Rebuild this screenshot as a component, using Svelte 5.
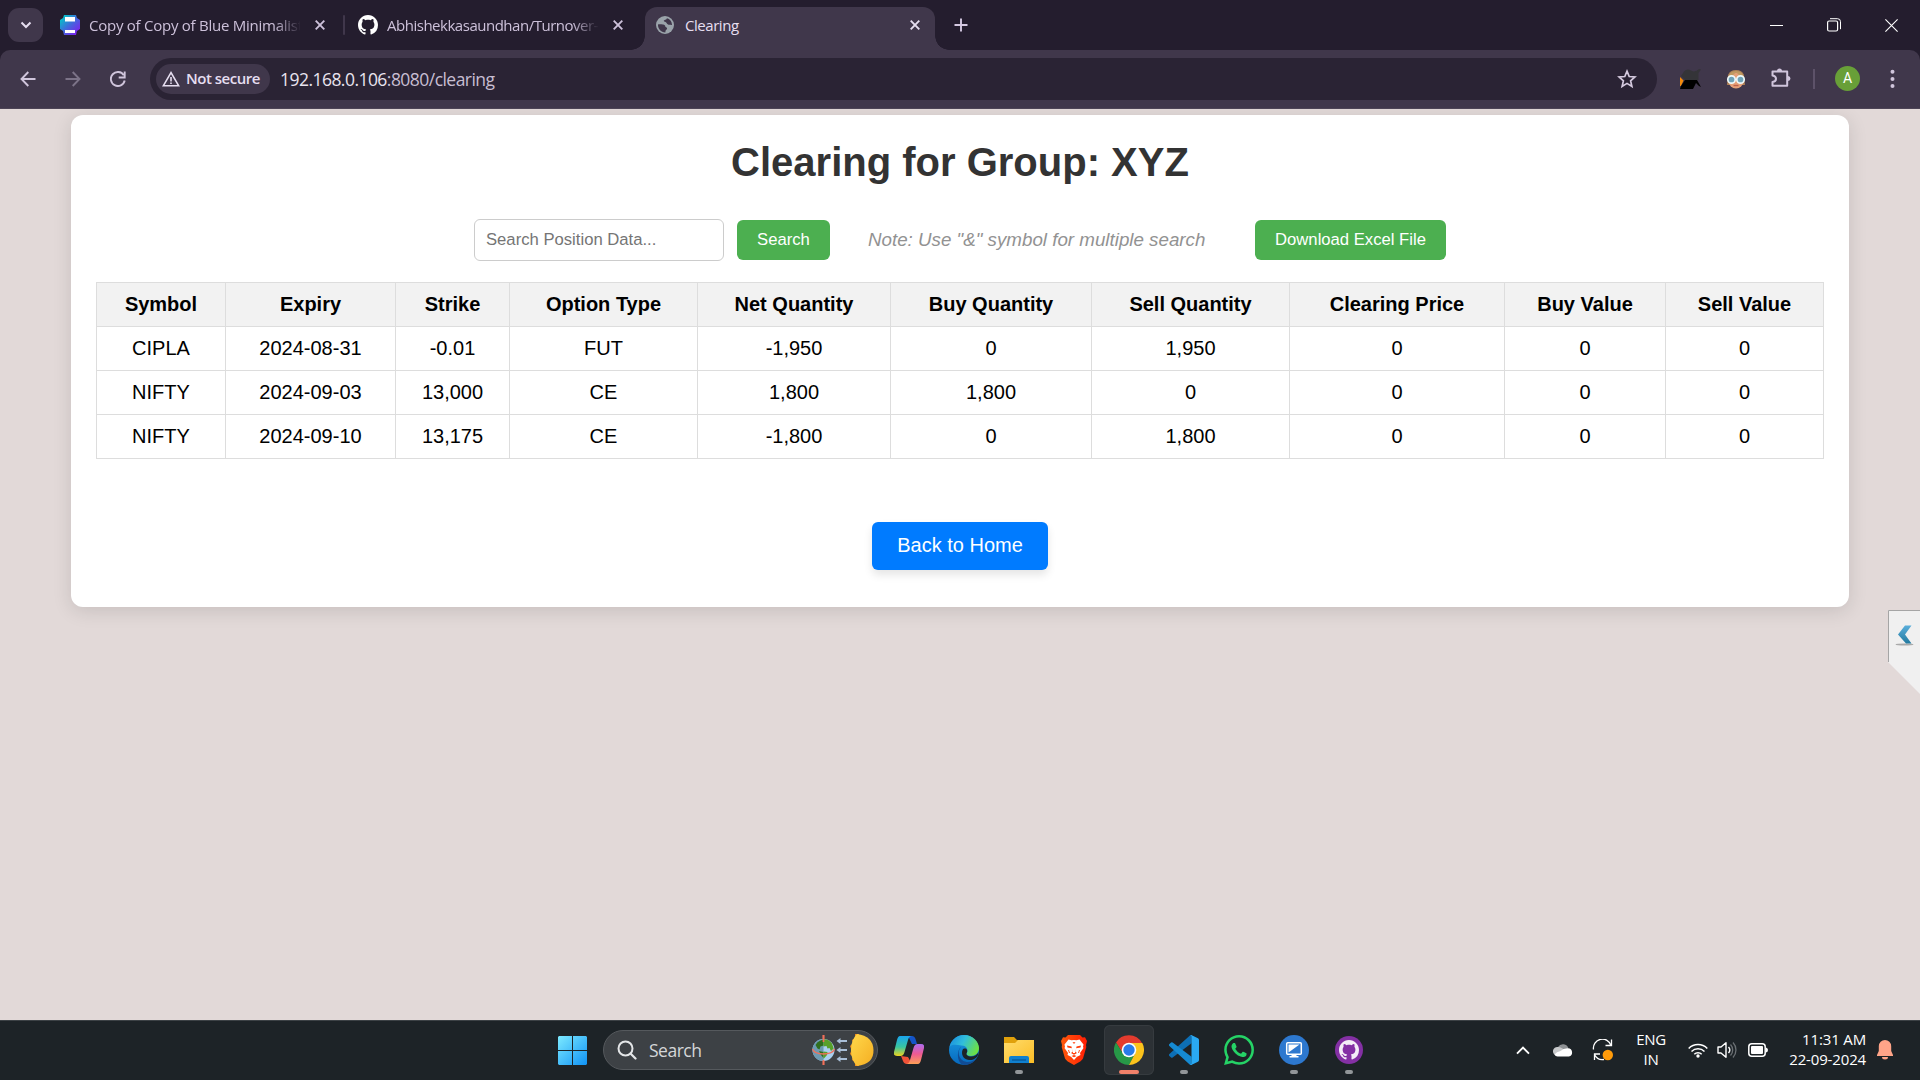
<script>
  const columns = [
    { label: 'Symbol', width: 129 },
    { label: 'Expiry', width: 170 },
    { label: 'Strike', width: 114 },
    { label: 'Option Type', width: 188 },
    { label: 'Net Quantity', width: 193 },
    { label: 'Buy Quantity', width: 201 },
    { label: 'Sell Quantity', width: 198 },
    { label: 'Clearing Price', width: 215 },
    { label: 'Buy Value', width: 161 },
    { label: 'Sell Value', width: 158 }
  ];
  const rows = [
    ['CIPLA', '2024-08-31', '-0.01', 'FUT', '-1,950', '0', '1,950', '0', '0', '0'],
    ['NIFTY', '2024-09-03', '13,000', 'CE', '1,800', '1,800', '0', '0', '0', '0'],
    ['NIFTY', '2024-09-10', '13,175', 'CE', '-1,800', '0', '1,800', '0', '0', '0']
  ];
  const githubMark =
    'M8 0C3.58 0 0 3.58 0 8c0 3.54 2.29 6.53 5.47 7.59.4.07.55-.17.55-.38 0-.19-.01-.82-.01-1.49-2.01.37-2.53-.49-2.69-.94-.09-.23-.48-.94-.82-1.13-.28-.15-.68-.52-.01-.53.63-.01 1.08.58 1.23.82.72 1.21 1.87.87 2.33.66.07-.52.28-.87.51-1.07-1.78-.2-3.64-.89-3.64-3.95 0-.87.31-1.59.82-2.15-.08-.2-.36-1.02.08-2.12 0 0 .67-.21 2.2.82.64-.18 1.32-.27 2-.27s1.36.09 2 .27c1.53-1.04 2.2-.82 2.2-.82.44 1.1.16 1.92.08 2.12.51.56.82 1.27.82 2.15 0 3.07-1.87 3.75-3.65 3.95.29.25.54.73.54 1.48 0 1.07-.01 1.93-.01 2.2 0 .21.15.46.55.38A8.01 8.01 0 0 0 16 8c0-4.42-3.58-8-8-8z';
</script>

{#snippet closeIcon()}
  <svg class="tab-close" width="12" height="12" viewBox="0 0 12 12"><path d="M1.7 1.7l8.6 8.6M10.3 1.7l-8.6 8.6" stroke="currentColor" stroke-width="1.9" fill="none" /></svg>
{/snippet}

<div class="screen">
  <header class="tabstrip">
    <div class="tab-search">
      <svg width="12" height="8" viewBox="0 0 12 8"><path d="M1.5 1.5L6 6l4.500-4.500" stroke="#e6def0" stroke-width="2" fill="none" /></svg>
    </div>
    <div class="tab tab-one">
      <svg width="20" height="20" viewBox="0 0 20 20">
        <defs><linearGradient id="canva" x1="0" y1="0" x2="1" y2="1"><stop offset="0.1" stop-color="#04c4c8" /><stop offset="0.5" stop-color="#4268dc" /><stop offset="0.9" stop-color="#7d20ee" /></linearGradient></defs>
        <path d="M4 0h12l1 3 3 2v9l-3 2-1 4H4l-1-4-3-2V5l3-2z" fill="url(#canva)" />
        <path d="M5 2h10v4.500H5zM5 15h10v3H5z" fill="#fff" />
      </svg>
      <span class="tab-title faded"><span class="t1">Copy of Copy of Blue Minimalist</span></span>
      {@render closeIcon()}
    </div>
    <div class="tab-sep"></div>
    <div class="tab tab-two">
      <svg width="20" height="20" viewBox="0 0 16 16"><path d={githubMark} fill="#fff" /></svg>
      <span class="tab-title faded"><span class="t2">Abhishekkasaundhan/Turnover-</span></span>
      {@render closeIcon()}
    </div>
    <div class="tab tab-active">
      <svg width="18" height="18" viewBox="0 0 18 18">
        <circle cx="9" cy="9" r="9" fill="#9aa3aa" />
        <path d="M2 8.400c1.600-.3 3.500.1 5 .1 1.600 0 2.300 1 2.300 2.100 0 1 1.800.5 1.800 2 0 1.300-1.500 1.300-1.600 2.600l-.2 1.200C5 16.200 1.700 12.600 2 8.400zM10.800 2.200c.2 1.600-3 1.200-3 2.900 0 1 2.300.6 2.800 1.800.5 1.300 2.100 2.200 3.500 1.800.8-.2 1.300.1 1.900.3C16 5.400 13.800 2.900 10.800 2.200z" fill="#40374b" />
      </svg>
      <span class="tab-title bright t3">Clearing</span>
      {@render closeIcon()}
    </div>
    <svg class="new-tab" width="14" height="14" viewBox="0 0 14 14"><path d="M7 .5v13M.5 7h13" stroke="#d5c9e2" stroke-width="1.900" /></svg>
    <div class="window-controls">
      <svg width="13" height="13" viewBox="0 0 13 13"><path d="M0 6.500h13" stroke="#fff" /></svg>
      <svg width="14" height="14" viewBox="0 0 14 14"><rect x=".6" y="3" width="10" height="10" rx="1.500" fill="none" stroke="#fff" stroke-width="1.200" /><path d="M3 .7h7.500a3 3 0 0 1 3 3v7.500" fill="none" stroke="#fff" /></svg>
      <svg width="13" height="13" viewBox="0 0 13 13"><path d="M.4.4l12.200 12.200M12.600.4L.4 12.600" stroke="#fff" stroke-width="1.100" /></svg>
    </div>
  </header>

  <nav class="toolbar-back"><div class="toolbar">
    <div class="nav-icons">
      <svg width="16" height="16" viewBox="0 0 16 16"><path d="M8.300 1L1.500 8l6.800 7M1.500 8H15.500" stroke="#d0c5dc" stroke-width="1.900" fill="none" /></svg>
      <svg width="16" height="16" viewBox="0 0 16 16"><path d="M7.700 1l6.800 7-6.800 7M14.500 8H.5" stroke="#7c7388" stroke-width="1.900" fill="none" /></svg>
      <svg width="16" height="16" viewBox="0 0 16 16"><path d="M13.800 4.300A7 7 0 1 0 14.700 9.500" stroke="#d0c5dc" stroke-width="1.900" fill="none" /><path d="M14.700.5v6H8.700" stroke="#d0c5dc" stroke-width="1.900" fill="none" /></svg>
    </div>
    <div class="omnibox">
      <div class="chip">
        <svg width="18" height="16" viewBox="0 0 18 16"><path d="M9 1.700L1.400 14.700h15.200z" fill="none" stroke="#e6def0" stroke-width="1.600" /><path d="M9 6v4.500M9 11.500v1.600" stroke="#e6def0" stroke-width="1.600" /></svg>
        <span>Not secure</span>
      </div>
      <span class="url">192.168.0.106<span class="dim">:8080/clearing</span></span>
      <svg class="star" width="20" height="20" viewBox="0 0 20 20"><path d="M10 2.200l2.200 5.300 5.700.5-4.300 3.800 1.300 5.600L10 14.400l-4.900 3 1.300-5.600L2.100 8l5.700-.5z" fill="none" stroke="#d5cadf" stroke-width="1.700" /></svg>
    </div>
    <svg class="ext-one" width="22" height="22" viewBox="0 0 22 22">
      <path d="M0 9l3.500 3.500L1 18H0z" fill="#f28a0c" /><path d="M4 3.500Q7 0 11 2.500t8-1.500l2 .500-2.500 3.500v7H5l-4-4z" fill="#343438" /><path d="M5 12h12l4 7-2-1-3-3-3 6H0l1-3z" fill="#000" />
    </svg>
    <svg class="ext-two" width="20" height="20" viewBox="0 0 20 20">
      <path d="M1 16L2 6q2-5 8-5t8 5l1 10z" fill="#ad8157" /><ellipse cx="10" cy="11.500" rx="7.500" ry="8" fill="#e5a078" /><path d="M2.500 9Q6 8 10 3q3 4 7.500 6Q17 2 10 2T2.500 9z" fill="#c09a62" />
      <circle cx="5.500" cy="10.500" r="3.700" fill="#6fa3b8" stroke="#edf8fa" stroke-width="1.700" /><circle cx="14.500" cy="10.500" r="3.700" fill="#6fa3b8" stroke="#edf8fa" stroke-width="1.700" /><path d="M7.500 16.500h5" stroke="#bd604b" stroke-width="1.400" />
    </svg>
    <svg class="puzzle" width="22" height="22" viewBox="0 0 22 22">
      <path d="M2.500 4.500H17.200V18.800H2.500V15q3.500-.5 3.500-3.300T2.500 8.400z" fill="none" stroke="#d0c5dc" stroke-width="2" stroke-linejoin="round" /><path d="M7 4a2.500 2.500 0 0 1 5 0zM18 9a2.500 2.500 0 0 1 0 5z" fill="#d0c5dc" />
    </svg>
    <div class="bar-sep"></div>
    <div class="avatar">A</div>
    <svg class="dots" width="5" height="20" viewBox="0 0 5 20"><g fill="#d0c5dc"><circle cx="2.500" cy="2.800" r="2" /><circle cx="2.500" cy="10" r="2" /><circle cx="2.500" cy="17" r="2" /></g></svg>
  </div></nav>

  <main class="page">
    <section class="card">
      <h1>Clearing for Group: XYZ</h1>
      <div class="controls">
        <input type="text" placeholder="Search Position Data..." />
        <button class="green search-btn">Search</button>
        <span class="note">Note: Use "&amp;" symbol for multiple search</span>
        <button class="green download-btn">Download Excel File</button>
      </div>
      <table>
        <colgroup>
          {#each columns as column}<col style="width: {column.width}px" />{/each}
        </colgroup>
        <thead>
          <tr>{#each columns as column}<th>{column.label}</th>{/each}</tr>
        </thead>
        <tbody>
          {#each rows as row}
            <tr>{#each row as cell}<td>{cell}</td>{/each}</tr>
          {/each}
        </tbody>
      </table>
      <button class="home">Back to Home</button>
    </section>
    <svg class="side-tab" width="32" height="84" viewBox="0 0 32 84">
      <defs><linearGradient id="chev" x1="0" y1="0" x2="0" y2="1"><stop offset="0" stop-color="#5aaedb" /><stop offset="1" stop-color="#237a9f" /></linearGradient></defs>
      <path d="M0 0H32V84L0 52z" fill="#f0f0f0" /><path d="M.5 52V.5H32" fill="none" stroke="#a5a5a5" />
      <ellipse cx="16.500" cy="34.500" rx="9" ry="1" fill="#aaa" />
      <path d="M17 15.500h6.500l-6.500 9 6.500 9H18l-8-9z" fill="url(#chev)" />
    </svg>
  </main>

  <footer class="taskbar">
    <svg class="start" width="29" height="29" viewBox="0 0 29 29">
      <defs><linearGradient id="win" x1="0" y1="0" x2="1" y2="1"><stop offset="0" stop-color="#7deaff" /><stop offset="1" stop-color="#1093f5" /></linearGradient></defs>
      <path d="M1 0h13v14H0V1zM15 0h13l1 1v13H15zM0 15h14v14H1l-1-1zM15 15h14v13l-1 1H15z" fill="url(#win)" />
    </svg>
    <div class="task-search">
      <svg width="20" height="20" viewBox="0 0 20 20"><circle cx="8.500" cy="8.500" r="7" fill="none" stroke="#e4e6e8" stroke-width="2" /><path d="M13.500 13.500l5 5" stroke="#e4e6e8" stroke-width="2.200" stroke-linecap="round" /></svg>
      <span>Search</span>
      <svg class="equinox" width="64" height="34" viewBox="0 0 64 34">
        <defs><linearGradient id="sun" x1="0" y1="0" x2="1" y2="1"><stop offset="0" stop-color="#ffd84b" /><stop offset="1" stop-color="#f5ae22" /></linearGradient></defs>
        <path d="M12.500 2v30" stroke="#f0705a" stroke-width="1.700" />
        <circle cx="12.500" cy="17" r="11" fill="#a9d0f0" /><path d="M12.500 6a11 11 0 0 0 0 22z" fill="#6d9ab2" />
        <path d="M4.500 12Q6 8.500 9.500 7.500l3-1v6l-3 1-1 3-2-1zM8 18l4.500 1v6L10 22z" fill="#2f6f1f" />
        <path d="M12.500 6.200Q18 6 21 10.500l1.700 5-2.700 2.500-1.500-3-2 .5-1-2.500-3 .5zM12.500 18.500l4 .5-.5 3-3.500 4z" fill="#58a02b" />
        <path d="M1.500 16q2 5 11 5t11-5" fill="none" stroke="#f0705a" stroke-width="1.400" />
        <path d="M12.500 2v7M12.500 27v5" stroke="#f0705a" stroke-width="1.700" />
        <g fill="#a9bfd8"><path d="M25.500 8l4-3v2h6.500v2h-6.500v2zM25.500 17l4-3v2h6.500v2h-6.500v2zM25.500 26l4-3v2h6.500v2h-6.500v2z" /></g>
        <path d="M48 1l-4 0v4l-3 2 1 3-3 3 1.500 4-1.500 4 3 3-1 3 3 2v4l4 0z" fill="#f08a1c" /><path d="M46 1q16 2 16.500 16T46 33q-6-6-6-16T46 1z" fill="url(#sun)" />
      </svg>
    </div>
    <div class="apps">
      <div class="app">
        <svg width="30" height="28" viewBox="0 0 30 28">
          <defs>
            <linearGradient id="cp1" x1="0" y1="0" x2="0" y2="1"><stop offset="0" stop-color="#1aa5ee" /><stop offset=".55" stop-color="#39c6a0" /><stop offset="1" stop-color="#ecd31d" /></linearGradient>
            <linearGradient id="cp2" x1="0" y1="0" x2="0" y2="1"><stop offset="0" stop-color="#ad6cf0" /><stop offset=".5" stop-color="#ee5a92" /><stop offset="1" stop-color="#fda057" /></linearGradient>
          </defs>
          <path d="M13 0h5q2.500 0 3.500 3l1.500 5h-5L15 2z" fill="#1454c8" /><path d="M7 20l2 5q1 3 4 3h5l-4-7z" fill="#ef5238" />
          <path d="M6 0h12q-3 0-4 4l-3.500 12q-1 4-4 4H3q-4 0-3-4L3 4q1-4 3-4z" fill="url(#cp1)" />
          <path d="M24 28H12q3 0 4-4l3.500-12q1-4 4-4H27q4 0 3 4l-3 12q-1 4-3 4z" fill="url(#cp2)" />
        </svg>
      </div>
      <div class="app">
        <svg width="30" height="30" viewBox="0 0 30 30">
          <defs>
            <linearGradient id="ed1" x1="0" y1=".2" x2="1" y2=".6"><stop offset="0" stop-color="#1a8fe0" /><stop offset=".45" stop-color="#31bedb" /><stop offset="1" stop-color="#6fe23f" /></linearGradient>
            <linearGradient id="ed2" x1="0" y1="0" x2="0" y2="1"><stop offset="0" stop-color="#1b9be2" /><stop offset="1" stop-color="#0668bd" /></linearGradient>
          </defs>
          <circle cx="15" cy="15" r="15" fill="url(#ed2)" />
          <path d="M.6 12C2 5 8 0 15 0c9 0 15 7 15 13 0 5-4 8-8 8-3 0-5-1-4.500-2.500 2.500-3 .500-8-5-8C7 9.500 2.500 9 .6 12z" fill="url(#ed1)" />
          <path d="M12 12c-5 6-1 15 7 15 4 0 7-2 8.800-4.500C25 28 20 30 16 30 8 30 7 16 12 12z" fill="#114c94" />
          <path d="M17.500 18.500C17 20 19 21.500 22 21.500c3 0 6-1.500 7.500-4.500l-.5 3c-1 3-5 5.500-9 5-6-.5-8-6-6.500-10 .800-1.800 4-2 4.500 0 .500 1.200 0 2.300-.5 3.500z" fill="#1d2327" />
        </svg>
      </div>
      <div class="app">
        <svg width="30" height="28" viewBox="0 0 30 28">
          <defs><linearGradient id="fold" x1="0" y1="0" x2="1" y2="1"><stop offset="0" stop-color="#ffdc6b" /><stop offset="1" stop-color="#fbbd26" /></linearGradient></defs>
          <path d="M0 1h10l3 3h17v6H0z" fill="#e0a10b" /><path d="M0 7h11l3-3h16v23H0z" fill="url(#fold)" />
          <path d="M5 27v-5q0-2 2-2h16q2 0 2 2v5z" fill="#1080cf" /><path d="M8 24h14" stroke="#085796" stroke-width="1.300" />
        </svg>
        <i class="mark"></i>
      </div>
      <div class="app">
        <svg width="26" height="30" viewBox="0 0 26 30">
          <defs><linearGradient id="br" x1="0" x2="1"><stop offset="0" stop-color="#ff5a0b" /><stop offset="1" stop-color="#ff1d05" /></linearGradient></defs>
          <path d="M7 0h12l2.500 2.500 2.500-.3 2 3.800-1 4 .3 2-3.300 11.500Q21 26 13 30q-8-4-9-6.500L.7 12 1 10 0 6l2-3.800 2.500.3z" fill="url(#br)" />
          <path d="M7.500 4.500l3 .8L13 5l2.500.3 3-.8 4 5-.5 2.500.5 1-3.500 5 .5 2-3.500 1.800L13 25l-3-3.200L6.500 20l.5-2-3.500-5 .5-1-.5-2.500z" fill="#fff" />
          <path d="M6 10.500l4.500 1 .3 1.700-4.300-.7zM20 10.500l-4.500 1-.3 1.700 4.300-.7zM11.300 14l.7 2.500-2 1.500 3 1.800 3-1.800-2-1.500.7-2.500-.7 4h-2zM8 15.500l1 4M18 15.500l-1 4M10.500 21l2.500-1 2.500 1-2.500 1.300z" fill="#ff3d09" />
          <path d="M12 7l1 1.500L14 7M7.500 15l1 3M18.500 15l-1 3" stroke="#ff3d09" stroke-width=".9" fill="none" />
        </svg>
      </div>
      <div class="app selected">
        <svg width="30" height="30" viewBox="0 0 30 30">
          <path d="M15 8H28A15 15 0 0 0 2 7.500L8.940 18.500A7 7 0 0 1 15 8z" fill="#e33b2e" />
          <path d="M2 7.500A15 15 0 0 0 15 30L21.060 18.500A7 7 0 0 1 8.940 18.500z" fill="#279847" />
          <path d="M15 8H28.300A15 15 0 0 1 15 30L21.060 18.500A7 7 0 0 0 15 8z" fill="#fcc31c" />
          <circle cx="15" cy="15" r="7.300" fill="#fff" /><circle cx="15" cy="15" r="5.700" fill="#2a7bea" />
        </svg>
        <i class="mark wide"></i>
      </div>
      <div class="app">
        <svg width="30" height="30" viewBox="0 0 24 24">
          <path d="M18.210.21a1.494 1.494 0 0 0-1.705.29L.327 15.260a1 1 0 0 0 0 1.479L1.650 17.940a1 1 0 0 0 1.276.057L18 6.552z" fill="#0d6fb5" />
          <path d="M18.210 23.790a1.494 1.494 0 0 1-1.705-.29L.327 8.740a1 1 0 0 1 0-1.479L1.650 6.060a1 1 0 0 1 1.276-.057L18 17.448z" fill="#158ad2" />
          <path d="M16.900.25q.7-.3 1.310-.04l4.940 2.377A1.500 1.500 0 0 1 24 3.940v16.120a1.500 1.500 0 0 1-.85 1.352L18.210 23.790q-.7.300-1.310-.04.8.2 1.100-.9V1.150Q17.700.05 16.900.25z" fill="#2aa9f3" />
        </svg>
        <i class="mark"></i>
      </div>
      <div class="app">
        <svg width="30" height="30" viewBox="0 0 24 24"><path fill="#25d366" d="M17.472 14.382c-.297-.149-1.758-.867-2.03-.967-.273-.099-.471-.148-.67.15-.197.297-.767.966-.94 1.164-.173.199-.347.223-.644.075-.297-.15-1.255-.463-2.39-1.475-.883-.788-1.480-1.761-1.653-2.059-.173-.297-.018-.458.13-.606.134-.133.298-.347.446-.52.149-.174.198-.298.298-.497.099-.198.05-.371-.025-.52-.075-.149-.669-1.612-.916-2.207-.242-.579-.487-.5-.669-.51-.173-.008-.371-.01-.57-.01-.198 0-.52.074-.792.372-.272.297-1.040 1.016-1.040 2.479 0 1.462 1.065 2.875 1.213 3.074.149.198 2.096 3.200 5.077 4.487.709.306 1.262.489 1.694.625.712.227 1.360.195 1.871.118.571-.085 1.758-.719 2.006-1.413.248-.694.248-1.289.173-1.413-.074-.124-.272-.198-.57-.347m-5.421 7.403h-.004a9.870 9.870 0 0 1-5.031-1.378l-.361-.214-3.741.982.998-3.648-.235-.374a9.860 9.860 0 0 1-1.510-5.260c.001-5.450 4.436-9.884 9.888-9.884 2.640 0 5.122 1.030 6.988 2.898a9.825 9.825 0 0 1 2.893 6.994c-.003 5.450-4.437 9.884-9.885 9.884m8.413-18.297A11.815 11.815 0 0 0 12.050 0C5.495 0 .16 5.335.157 11.892c0 2.096.547 4.142 1.588 5.945L.057 24l6.305-1.654a11.882 11.882 0 0 0 5.683 1.448h.005c6.554 0 11.890-5.335 11.893-11.893a11.821 11.821 0 0 0-3.480-8.413z" /></svg>
      </div>
      <div class="app">
        <svg width="30" height="30" viewBox="0 0 30 30"><circle cx="15" cy="15" r="15" fill="#2d78cf" /><rect x="7.700" y="7.700" width="14.600" height="11.600" rx="1" fill="#2d78cf" stroke="#fff" stroke-width="1.500" /><path d="M9.500 9.500h11l-11 8z" fill="#fff" /><path d="M12.500 19h5v2h2v1.600h-9V21h2z" fill="#fff" /></svg>
        <i class="mark"></i>
      </div>
      <div class="app">
        <svg width="28" height="28" viewBox="0 0 28 28"><circle cx="14" cy="14" r="14" fill="#8430a4" /><path transform="translate(4 4) scale(1.250)" d={githubMark} fill="#f4edf7" /></svg>
        <i class="mark"></i>
      </div>
    </div>
    <div class="tray">
      <svg width="14" height="9" viewBox="0 0 14 9"><path d="M1 7.700L7 1.700l6 6" fill="none" stroke="#fff" stroke-width="1.900" /></svg>
      <svg class="cloud" width="20" height="14" viewBox="0 0 20 14"><path d="M5 4a5.800 5.800 0 0 1 10.500 1.200L10 8z" fill="#8e9194" /><path d="M3.500 12.500A4.300 4.300 0 0 1 5 4q2.500-.2 4.500 1.600l4 2.900z" fill="#c7c9cb" /><path d="M1.500 11.500q2-3 6-3.500 3-3 7.500-2.800a4.200 4.200 0 0 1 .8 8.300H4.500q-2 0-3-2z" fill="#fff" /></svg>
      <svg class="sync" width="22" height="22" viewBox="0 0 22 22"><path d="M1.500 10.500A9 9 0 0 1 19 6.500M19.500.5v6h-6M12 20.500a9 9 0 0 1-9.500-5M2.500 21v-6H8" fill="none" stroke="#fff" stroke-width="1.300" /><circle cx="15.800" cy="16" r="5.200" fill="#ff9b0a" /></svg>
      <div class="lang"><span>ENG</span><span>IN</span></div>
      <svg class="wifi" width="20" height="15" viewBox="0 0 20 15"><g fill="none" stroke="#fff" stroke-width="1.500"><path d="M.7 5.500a13 13 0 0 1 18.600 0M3.500 8.500a9.200 9.200 0 0 1 13 0M6.300 11.300a5.200 5.200 0 0 1 7.400 0" /></g><circle cx="10" cy="13" r="1.700" fill="#fff" /></svg>
      <svg class="volume" width="20" height="18" viewBox="0 0 20 18"><path d="M1 6h3l5-4.300v14.600L4 12H1z" fill="none" stroke="#fff" stroke-width="1.400" stroke-linejoin="round" /><path d="M11.500 6a4.500 4.500 0 0 1 0 6" fill="none" stroke="#fff" stroke-width="1.400" /><path d="M13.500 3.500a8 8 0 0 1 0 11M16 1.500a11 11 0 0 1 0 15" fill="none" stroke="#6b7074" stroke-width="1.300" /></svg>
      <svg class="battery" width="21" height="14" viewBox="0 0 21 14"><rect x=".8" y=".8" width="16.400" height="12.400" rx="3" fill="none" stroke="#fff" stroke-width="1.500" /><rect x="3" y="3" width="12" height="8" rx="1" fill="#fff" /><path d="M18 4.500q2 .5 2 2.500t-2 2.500z" fill="#fff" /></svg>
      <div class="clock"><span class="time">11:31 AM</span><span class="date">22-09-2024</span></div>
      <svg class="bell" width="18" height="20" viewBox="0 0 18 20"><path d="M9 0a6.200 6.200 0 0 1 6.200 6.200V11l1.800 4v1H1v-1l1.800-4V6.200A6.200 6.200 0 0 1 9 0zM6 17h6a3 2.500 0 0 1-6 0z" fill="#ffa488" /></svg>
    </div>
  </footer>
</div>

<style>
  :global(body) { margin: 0; overflow: hidden; }
  .screen { width: 1920px; height: 1080px; display: flex; flex-direction: column; font-family: 'Open Sans', 'Noto Sans', sans-serif; white-space: nowrap; overflow: hidden; }
  svg { flex: none; display: block; }
  .tabstrip { height: 50px; flex: none; background: #241d2e; display: flex; align-items: center; }
  .tab-search { width: 35px; height: 34px; border-radius: 11px; margin-left: 8px; background: #40374b; display: flex; align-items: center; justify-content: center; }
  .tab { display: flex; align-items: center; color: #cdc1da; font-size: 15px; }
  .tab-one { margin-left: 17px; }
  .tab-one .tab-title { width: 211px; margin-left: 9px; }
  .tab-two .tab-title { width: 211px; margin-left: 9px; }
  .tab-one .tab-close { margin-left: 14px; }
  .tab-two .tab-close { margin-left: 14px; }
  .tab-title { overflow: hidden; line-height: 22px; }
  .faded { mask-image: linear-gradient(90deg, #000 185px, transparent 212px); }
  .t1 { letter-spacing: -0.25px; }
  .t2 { letter-spacing: -0.48px; }
  .t3 { letter-spacing: -0.45px; }
  .tab-sep { width: 2px; height: 20px; margin: 0 13px 0 17px; background: #40374b; border-radius: 1px; }
  .tab-active { position: relative; align-self: flex-end; box-sizing: border-box; width: 290px; height: 43px; margin-left: 21px; padding: 0 14px 7px 11px; background: #40374b; border-radius: 12px 12px 0 0; color: #e6def0; }
  .tab-active::before, .tab-active::after { content: ''; position: absolute; bottom: 0; width: 14px; height: 14px; }
  .tab-active::before { left: -14px; background: radial-gradient(circle at 0 0, transparent 13.500px, #40374b 14px); }
  .tab-active::after { right: -14px; background: radial-gradient(circle at 100% 0, transparent 13.500px, #40374b 14px); }
  .tab-active .tab-title { margin-left: 11px; flex: 1; }
  .new-tab { margin-left: 19px; }
  .window-controls { display: flex; align-items: center; margin-left: auto; margin-right: 22px; gap: 44px; }
  .toolbar-back { flex: none; background: #241d2e; }
  .toolbar { height: 59px; box-sizing: border-box; background: #40374b; border-bottom: 1px solid #4d4456; border-radius: 10px 10px 0 0; display: flex; align-items: center; }
  .nav-icons { display: flex; gap: 29px; margin-left: 20px; width: 130px; }
  .omnibox { width: 1507px; height: 42px; border-radius: 21px; background: #2a2334; display: flex; align-items: center; }
  .chip { box-sizing: border-box; width: 114px; height: 30px; border-radius: 15px; margin-left: 6px; padding-left: 6px; background: #40374b; display: flex; align-items: center; gap: 6px; color: #e6def0; font-size: 15px; font-weight: 600; letter-spacing: -0.5px; }
  .chip span { padding-bottom: 2px; }
  .url { margin-left: 10px; color: #e9e3ef; font-size: 17.500px; letter-spacing: -0.54px; }
  .dim { color: #c8bed2; }
  .star { margin-left: auto; margin-right: 20px; }
  .ext-one { margin-left: 23px; }
  .ext-two { margin-left: 24px; }
  .puzzle { margin-left: 24px; margin-bottom: 2px; }
  .bar-sep { width: 2px; height: 20px; margin-left: 21px; background: #5d5269; }
  .avatar { width: 25px; height: 25px; border-radius: 50%; margin-left: 20px; margin-bottom: 1px; background: #689f38; color: #fff; font: 14px/25px Roboto, sans-serif; text-align: center; }
  .dots { margin-left: 30px; }
  .page { flex: 1; min-height: 0; background: #e2d9d8; position: relative; overflow: hidden; font-family: 'Liberation Sans', Arial, sans-serif; }
  .card { box-sizing: border-box; width: 1778px; height: 492px; margin: 6px auto 0; padding: 0 25px; border-radius: 12px; background: #fff; box-shadow: 0 4px 19px rgba(0, 0, 0, 0.12); display: flex; flex-direction: column; align-items: center; }
  h1 { margin: 24px 0 0; font-size: 40px; line-height: 46px; font-weight: 700; color: #333; }
  .controls { display: flex; align-items: center; margin-top: 34px; height: 42px; }
  input { box-sizing: border-box; width: 250px; height: 42px; border: 1px solid #ccc; border-radius: 6px; padding: 0 11px; font: 16.670px 'Liberation Sans', Arial, sans-serif; }
  input::placeholder { color: #757575; opacity: 1; }
  .green { height: 40px; border: 0; border-radius: 6px; padding: 0; background: #4caf50; color: #fff; font: 16.670px 'Liberation Sans', Arial, sans-serif; }
  .search-btn { width: 93px; margin-left: 13px; }
  .note { width: 337px; margin-left: 38px; font-size: 18.750px; font-style: italic; color: #929292; }
  .download-btn { width: 191px; margin-left: 50px; }
  table { width: 1728px; margin-top: 21px; table-layout: fixed; border-collapse: collapse; font-size: 20px; line-height: 23px; color: #000; }
  th, td { box-sizing: border-box; height: 44px; padding: 0; border: 1px solid #ddd; text-align: center; }
  th { background: #f2f2f2; }
  .home { width: 176px; height: 48px; margin-top: 63px; padding: 0 0 2px; border: 0; border-radius: 6px; background: #007bff; color: #fff; font: 20px 'Liberation Sans', Arial, sans-serif; box-shadow: 0 5px 8px rgba(0, 0, 0, 0.1); }
  .side-tab { position: absolute; right: 0; top: 501px; }
  .taskbar { flex: none; height: 60px; box-sizing: border-box; box-shadow: inset 0 1px #3c4145; background: #1d2327; display: flex; align-items: center; color: #fff; }
  .start { margin-left: 558px; }
  .task-search { box-sizing: border-box; width: 275px; height: 40px; margin-left: 16px; padding-left: 13px; border: 1px solid #55595d; border-radius: 20px; background: #3d4145; display: flex; align-items: center; color: #d4d6d8; font-size: 17.500px; }
  .task-search span { margin-left: 12px; padding-bottom: 1px; letter-spacing: -0.5px; }
  .equinox { margin-left: auto; margin-right: 2px; }
  .apps { display: flex; margin-left: 6px; }
  .app { position: relative; width: 50px; height: 50px; margin-right: 5px; display: flex; align-items: center; justify-content: center; }
  .selected { background: #2c3135; border-radius: 6px; box-shadow: inset 0 0 0 1px #363b3f; }
  .mark { position: absolute; left: 21px; bottom: 1px; width: 8px; height: 4px; border-radius: 2px; background: #929699; }
  .wide { left: 15px; width: 20px; background: #f1816a; }
  .tray { display: flex; align-items: center; margin-left: auto; }
  .cloud { margin-left: 23px; }
  .sync { margin-left: 19px; }
  .lang { display: flex; flex-direction: column; align-items: center; width: 36px; margin-left: 19px; padding-bottom: 2px; font-size: 15px; line-height: 20px; letter-spacing: -0.3px; }
  .wifi { margin-left: 19px; }
  .volume { margin-left: 9px; }
  .battery { margin-left: 11px; }
  .clock { display: flex; flex-direction: column; align-items: flex-end; width: 80px; margin-left: 17px; padding-bottom: 3px; font-size: 15px; line-height: 20px; letter-spacing: -0.15px; }
  .bell { margin: 0 26px 0 10px; }
</style>
